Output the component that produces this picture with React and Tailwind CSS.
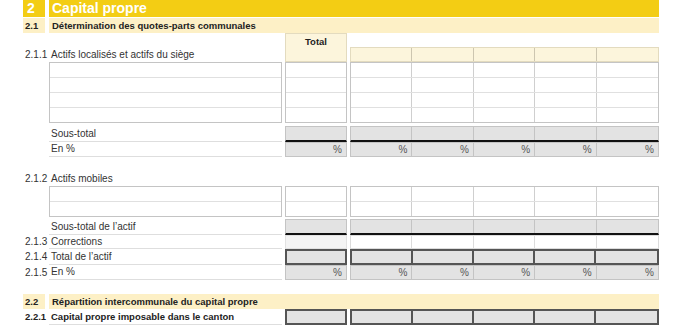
import React from "react"

const COLS = [0, 1, 2, 3, 4]

const kinds = {
  input: {
    box: "border border-[#c4c4c4] bg-white",
    cell: "border-r border-[#cfcfcf] last:border-r-0",
  },
  grey: {
    box: "border border-[#c4c4c4] bg-[#e3e3e3]",
    cell: "border-r border-[#c4c4c4] last:border-r-0",
  },
  sub: {
    box: "border border-[#c4c4c4] border-b-2 border-b-[#111] bg-[#e3e3e3]",
    cell: "border-r border-[#c4c4c4] last:border-r-0",
  },
  pct: {
    box: "border border-[#c4c4c4] bg-[#e3e3e3]",
    cell: "border-r border-[#c4c4c4] last:border-r-0 text-right pr-[4px] text-[#555]",
  },
  light: {
    box: "border border-[#e2e2e2] bg-[#f4f4f4]",
    cell: "border-r border-[#e2e2e2] last:border-r-0",
  },
  white: {
    box: "border border-[#dcdcdc] bg-white",
    cell: "border-r border-[#dcdcdc] last:border-r-0",
  },
  dark: {
    box: "border-2 border-[#555] bg-[#e3e3e3]",
    cell: "border-r-2 border-[#555] last:border-r-0",
  },
}

function Row({ num, label, bold, h = "h-[15px]", total, cols, line = true }) {
  const t = kinds[total]
  const c = kinds[cols || total]
  return (
    <div className={`flex ${h}`}>
      <div className={`flex w-[259px] items-center ${bold ? "text-[9.5px] font-bold text-[#222]" : ""}`}>
        <div className="w-[26px] pl-[2px]">{num}</div>
        <div className={`flex h-full w-[233px] items-center pl-[2px] ${line ? "border-b border-[#dedede]" : ""}`}>
          {label}
        </div>
      </div>
      <div className={`ml-[3px] w-[62px] leading-[12px] ${t.box}`}>
        <div className={`h-full ${t.cell} flex items-center justify-end`}>
          {total === "pct" ? "%" : ""}
        </div>
      </div>
      <div className={`ml-[3px] grid w-[309px] grid-cols-5 ${c.box}`}>
        {COLS.map((i) => (
          <div key={i} className={`flex items-center justify-end ${c.cell}`}>
            {(cols || total) === "pct" ? "%" : ""}
          </div>
        ))}
      </div>
    </div>
  )
}

function InputBlock({ rows }) {
  const list = Array.from({ length: rows })
  const row = "h-[15px] border-b border-[#e0e0e0] last:h-[14px] last:border-b-0"
  return (
    <div className="flex">
      <div className="ml-[26px] w-[233px] border border-[#c4c4c4]">
        {list.map((_, i) => (
          <div key={i} className={row} />
        ))}
      </div>
      <div className="ml-[3px] w-[62px] border border-[#c4c4c4]">
        {list.map((_, i) => (
          <div key={i} className={row} />
        ))}
      </div>
      <div className="ml-[3px] w-[309px] border border-[#c4c4c4]">
        {list.map((_, i) => (
          <div key={i} className={`grid grid-cols-5 ${row}`}>
            {COLS.map((j) => (
              <div key={j} className="border-r border-[#cfcfcf] last:border-r-0" />
            ))}
          </div>
        ))}
      </div>
    </div>
  )
}

function SectionBar({ num, title, big }) {
  const base = big
    ? "bg-[#f3cd14] text-white text-[14px] leading-[17px] h-[17px]"
    : "bg-[#fdf0c6] text-[#222] text-[9.5px] leading-[15px] h-[15px]"
  return (
    <div className="flex w-[636px] font-bold">
      <div className={`w-[22px] ${big ? "pl-[4px]" : "pl-[2px]"} ${base}`}>{num}</div>
      <div className={`ml-[4px] flex-1 ${big ? "pl-[3px]" : "pl-[3px]"} ${base}`}>{title}</div>
    </div>
  )
}

export default function App() {
  return (
    <div className="h-[326px] w-[682px] overflow-hidden bg-white pl-[23px] font-['Liberation_Sans',Arial,sans-serif] text-[10px] leading-[12px] text-[#333]">
      <SectionBar big num="2" title="Capital propre" />
      <div className="mt-px">
        <SectionBar num="2.1" title="Détermination des quotes-parts communales" />
      </div>

      {/* column heads */}
      <div className="flex h-[29px]">
        <div className="flex w-[259px] items-end pb-[1px]">
          <div className="w-[26px] pl-[2px]">2.1.1</div>
          <div className="pl-[2px]">Actifs localisés et actifs du siège</div>
        </div>
        <div className="ml-[3px] w-[62px] border border-[#e3dbbf] bg-[#fcf5dc] pt-[2px] text-center text-[9.5px] font-bold text-[#222]">
          Total
        </div>
        <div className="ml-[3px] mt-[14px] grid w-[309px] grid-cols-5 border border-[#e3dbbf] bg-[#fcf5dc]">
          {COLS.map((i) => (
            <div key={i} className="border-r border-[#cdc6b0] last:border-r-0" />
          ))}
        </div>
      </div>

      <InputBlock rows={4} />
      <div className="mt-[3px]">
        <Row label="Sous-total" total="sub" h="h-[16px]" />
        <Row label="En %" total="pct" />
      </div>

      <div className="flex h-[29px] items-end pb-[1px]">
        <div className="w-[26px] pl-[2px]">2.1.2</div>
        <div className="pl-[2px]">Actifs mobiles</div>
      </div>
      <InputBlock rows={2} />
      <div className="mt-[2px]">
        <Row label="Sous-total de l’actif" total="sub" h="h-[16px]" />
        <Row num="2.1.3" label="Corrections" total="light" cols="white" h="h-[14px]" />
        <Row num="2.1.4" label="Total de l’actif" total="dark" h="h-[16px]" />
        <Row num="2.1.5" label="En %" total="pct" />
      </div>

      <div className="mt-[14px]">
        <SectionBar num="2.2" title="Répartition intercommunale du capital propre" />
      </div>
      <Row num="2.2.1" label="Capital propre imposable dans le canton" bold total="dark" h="h-[16px]" />
    </div>
  )
}
